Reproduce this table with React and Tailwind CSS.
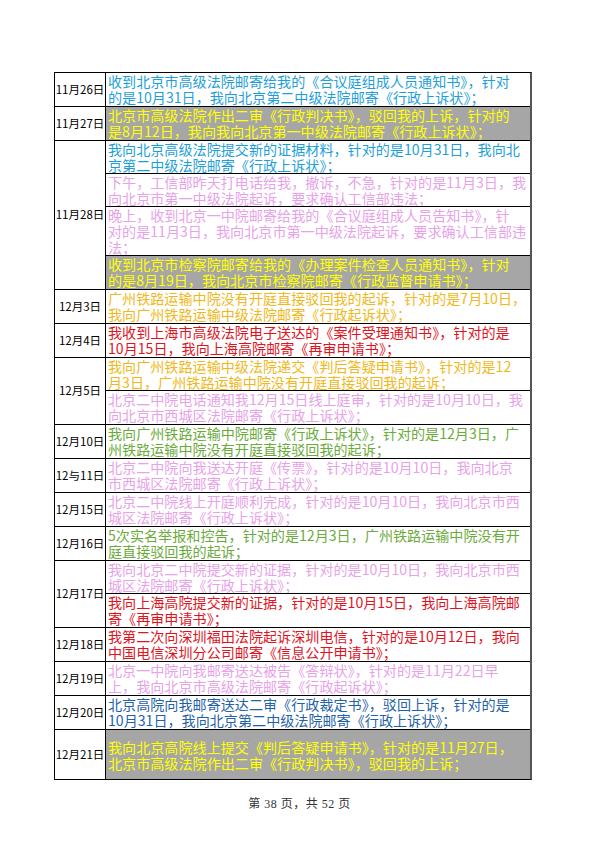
const colors = {
  blue: "text-[#1e9fd9]",
  navy: "text-[#1f63a8]",
  pink: "text-[#e8a2e9]",
  gold: "text-[#f0b81a]",
  red: "text-[#e0141e]",
  green: "text-[#6aab3c]",
  gray: "text-[#ffff00] bg-[#a6a6a6]",
};

const rows = [
  {
    date: "11月26日",
    items: [
      {
        c: "blue",
        lines: [
          "收到北京市高级法院邮寄给我的《合议庭组成人员通知书》，针对",
          "的是10月31日，我向北京第二中级法院邮寄《行政上诉状》；",
        ],
      },
    ],
  },
  {
    date: "11月27日",
    items: [
      {
        c: "gray",
        lines: [
          "北京市高级法院作出二审《行政判决书》，驳回我的上诉，针对的",
          "是8月12日，我向我向北京第一中级法院邮寄《行政上诉状》；",
        ],
      },
    ],
  },
  {
    date: "11月28日",
    items: [
      {
        c: "blue",
        lines: [
          "我向北京高级法院提交新的证据材料，针对的是10月31日，我向北",
          "京第二中级法院邮寄《行政上诉状》；",
        ],
      },
      {
        c: "pink",
        lines: [
          "下午，工信部昨天打电话给我，撤诉，不急，针对的是11月3日，我",
          "向北京市第一中级法院起诉，要求确认工信部违法；",
        ],
      },
      {
        c: "pink",
        tall: true,
        lines: [
          "晚上，收到北京一中院邮寄给我的《合议庭组成人员告知书》，针",
          "对的是11月3日，我向北京市第一中级法院起诉，要求确认工信部违",
          "法；",
        ],
      },
      {
        c: "gray",
        lines: [
          "收到北京市检察院邮寄给我的《办理案件检查人员通知书》，针对",
          "的是8月19日，我向北京市检察院邮寄《行政监督申请书》；",
        ],
      },
    ],
  },
  {
    date: "12月3日",
    items: [
      {
        c: "gold",
        lines: [
          "广州铁路运输中院没有开庭直接驳回我的起诉，针对的是7月10日，",
          "我向广州铁路运输中级法院邮寄《行政起诉状》；",
        ],
      },
    ],
  },
  {
    date: "12月4日",
    items: [
      {
        c: "red",
        lines: [
          "我收到上海市高级法院电子送达的《案件受理通知书》，针对的是",
          "10月15日，我向上海高院邮寄《再审申请书》；",
        ],
      },
    ],
  },
  {
    date: "12月5日",
    items: [
      {
        c: "gold",
        lines: [
          "我向广州铁路运输中级法院递交《判后答疑申请书》，针对的是12",
          "月3日，广州铁路运输中院没有开庭直接驳回我的起诉；",
        ],
      },
      {
        c: "pink",
        lines: [
          "北京二中院电话通知我12月15日线上庭审，针对的是10月10日，我",
          "向北京市西城区法院邮寄《行政上诉状》；",
        ],
      },
    ],
  },
  {
    date: "12月10日",
    items: [
      {
        c: "green",
        lines: [
          "我向广州铁路运输中院邮寄《行政上诉状》，针对的是12月3日，广",
          "州铁路运输中院没有开庭直接驳回我的起诉；",
        ],
      },
    ],
  },
  {
    date: "12与11日",
    items: [
      {
        c: "pink",
        lines: [
          "北京二中院向我送达开庭《传票》，针对的是10月10日，我向北京",
          "市西城区法院邮寄《行政上诉状》；",
        ],
      },
    ],
  },
  {
    date: "12月15日",
    items: [
      {
        c: "pink",
        lines: [
          "北京二中院线上开庭顺利完成，针对的是10月10日，我向北京市西",
          "城区法院邮寄《行政上诉状》；",
        ],
      },
    ],
  },
  {
    date: "12月16日",
    items: [
      {
        c: "green",
        lines: [
          "5次实名举报和控告，针对的是12月3日，广州铁路运输中院没有开",
          "庭直接驳回我的起诉；",
        ],
      },
    ],
  },
  {
    date: "12月17日",
    items: [
      {
        c: "pink",
        lines: [
          "我向北京二中院提交新的证据，针对的是10月10日，我向北京市西",
          "城区法院邮寄《行政上诉状》；",
        ],
      },
      {
        c: "red",
        lines: [
          "我向上海高院提交新的证据，针对的是10月15日，我向上海高院邮",
          "寄《再审申请书》；",
        ],
      },
    ],
  },
  {
    date: "12月18日",
    items: [
      {
        c: "red",
        lines: [
          "我第二次向深圳福田法院起诉深圳电信，针对的是10月12日，我向",
          "中国电信深圳分公司邮寄《信息公开申请书》；",
        ],
      },
    ],
  },
  {
    date: "12月19日",
    items: [
      {
        c: "pink",
        lines: [
          "北京一中院向我邮寄送达被告《答辩状》，针对的是11月22日早",
          "上，我向北京市高级法院邮寄《行政起诉状》；",
        ],
      },
    ],
  },
  {
    date: "12月20日",
    items: [
      {
        c: "navy",
        lines: [
          "北京高院向我邮寄送达二审《行政裁定书》，驳回上诉，针对的是",
          "10月31日，我向北京第二中级法院邮寄《行政上诉状》；",
        ],
      },
    ],
  },
  {
    date: "12月21日",
    items: [
      {
        c: "gray",
        tall: true,
        center: true,
        lines: [
          "我向北京高院线上提交《判后答疑申请书》，针对的是11月27日，",
          "北京市高级法院作出二审《行政判决书》，驳回我的上诉；",
        ],
      },
    ],
  },
];

function Cell({ item, last }) {
  return (
    <div
      className={`${item.tall ? "h-[49px]" : "h-[33px]"} ${
        last ? "" : "border-b border-black"
      } ${colors[item.c]} flex flex-col ${
        item.center ? "justify-center" : ""
      } pl-[2px] overflow-hidden`}>
      {item.lines.map((line, i) => (
        <div key={i} className="whitespace-nowrap leading-[16px] text-[14.1px]">
          {line}
        </div>
      ))}
    </div>
  );
}

export default function App() {
  return (
    <div
      className="relative w-[599px] h-[848px] bg-white pt-[72px] pl-[54px]"
      style={{ fontFamily: '"Noto Sans CJK SC", "Noto Sans", sans-serif' }}>
      <div className="w-[478px] border border-black border-r-2 border-r-[#555]">
        {rows.map((row, r) => (
          <div
            key={row.date}
            className={`flex ${r < rows.length - 1 ? "border-b border-black" : ""}`}>
            <div className="w-[51px] shrink-0 border-r border-black flex items-center justify-center text-[11.5px] text-black">
              {row.date}
            </div>
            <div className="flex-1 min-w-0 flex flex-col">
              {row.items.map((item, i) => (
                <Cell key={i} item={item} last={i === row.items.length - 1} />
              ))}
            </div>
          </div>
        ))}
      </div>

      <div
        className="absolute left-0 right-0 top-[795px] text-center text-[12px] text-[#333] tracking-[0.5px]"
        style={{ fontFamily: '"Liberation Serif", "Noto Sans CJK SC", serif' }}>
        第 38 页，共 52 页
      </div>
    </div>
  );
}
